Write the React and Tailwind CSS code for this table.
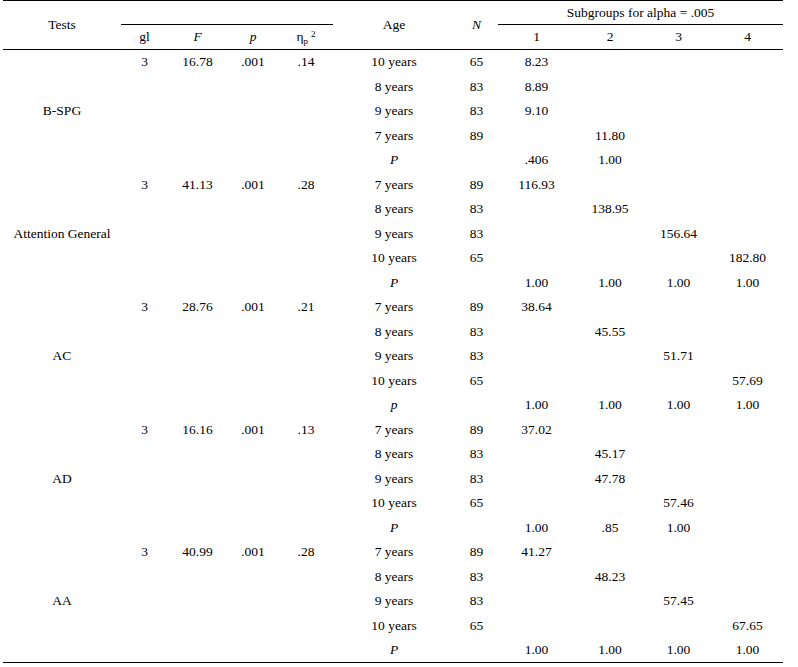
const groups = [
  {
    name: 'B-SPG',
    stats: ['3', '16.78', '.001', '.14'],
    rows: [
      ['10 years', '65', '8.23', '', '', ''],
      ['8 years', '83', '8.89', '', '', ''],
      ['9 years', '83', '9.10', '', '', ''],
      ['7 years', '89', '', '11.80', '', ''],
      ['P', '', '.406', '1.00', '', ''],
    ],
  },
  {
    name: 'Attention General',
    stats: ['3', '41.13', '.001', '.28'],
    rows: [
      ['7 years', '89', '116.93', '', '', ''],
      ['8 years', '83', '', '138.95', '', ''],
      ['9 years', '83', '', '', '156.64', ''],
      ['10 years', '65', '', '', '', '182.80'],
      ['P', '', '1.00', '1.00', '1.00', '1.00'],
    ],
  },
  {
    name: 'AC',
    stats: ['3', '28.76', '.001', '.21'],
    rows: [
      ['7 years', '89', '38.64', '', '', ''],
      ['8 years', '83', '', '45.55', '', ''],
      ['9 years', '83', '', '', '51.71', ''],
      ['10 years', '65', '', '', '', '57.69'],
      ['p', '', '1.00', '1.00', '1.00', '1.00'],
    ],
  },
  {
    name: 'AD',
    stats: ['3', '16.16', '.001', '.13'],
    rows: [
      ['7 years', '89', '37.02', '', '', ''],
      ['8 years', '83', '', '45.17', '', ''],
      ['9 years', '83', '', '47.78', '', ''],
      ['10 years', '65', '', '', '57.46', ''],
      ['P', '', '1.00', '.85', '1.00', ''],
    ],
  },
  {
    name: 'AA',
    stats: ['3', '40.99', '.001', '.28'],
    rows: [
      ['7 years', '89', '41.27', '', '', ''],
      ['8 years', '83', '', '48.23', '', ''],
      ['9 years', '83', '', '', '57.45', ''],
      ['10 years', '65', '', '', '', '67.65'],
      ['P', '', '1.00', '1.00', '1.00', '1.00'],
    ],
  },
];

const widths = [118, 47, 59, 52, 54, 122, 43, 77, 70, 67, 71];

export default function App() {
  return (
    <div className="bg-white w-[798px] h-[667px] text-black" style={{ fontFamily: '"Liberation Serif", "Times New Roman", serif' }}>
      <table className="ml-[3px] w-[780px] table-fixed border-collapse text-[13.5px] leading-none">
        <colgroup>
          {widths.map((w, i) => <col key={i} style={{ width: w }} />)}
        </colgroup>
        <thead>
          <tr className="h-[24px] border-t border-black">
            <th rowSpan={2} className="font-normal text-center align-middle">Tests</th>
            <th colSpan={4} className="border-b border-black" />
            <th rowSpan={2} className="font-normal text-center align-middle">Age</th>
            <th rowSpan={2} className="font-normal italic text-center align-middle">N</th>
            <th colSpan={4} className="font-normal text-center align-middle border-b border-black">Subgroups for alpha = .005</th>
          </tr>
          <tr className="h-[25px] border-b border-black">
            <th className="font-normal text-center">gl</th>
            <th className="font-normal italic text-center">F</th>
            <th className="font-normal italic text-center">p</th>
            <th className="font-normal text-center">
              η<sub className="text-[9px]">p</sub><sup className="text-[9px] ml-[3px]">2</sup>
            </th>
            <th className="font-normal text-center">1</th>
            <th className="font-normal text-center">2</th>
            <th className="font-normal text-center">3</th>
            <th className="font-normal text-center">4</th>
          </tr>
        </thead>
        <tbody className="border-b border-black">
          {groups.map((g) =>
            g.rows.map((r, i) => (
              <tr key={g.name + i} className="h-[24.5px]">
                {i === 0 && (
                  <td rowSpan={5} className="text-center align-middle">{g.name}</td>
                )}
                {g.stats.map((s, j) => (
                  <td key={j} className="text-center">{i === 0 ? s : ''}</td>
                ))}
                <td className={`text-center ${r[0].length === 1 ? 'italic' : ''}`}>{r[0]}</td>
                <td className="text-center">{r[1]}</td>
                <td className="text-center">{r[2]}</td>
                <td className="text-center">{r[3]}</td>
                <td className="text-center">{r[4]}</td>
                <td className="text-center">{r[5]}</td>
              </tr>
            ))
          )}
        </tbody>
      </table>
    </div>
  );
}
